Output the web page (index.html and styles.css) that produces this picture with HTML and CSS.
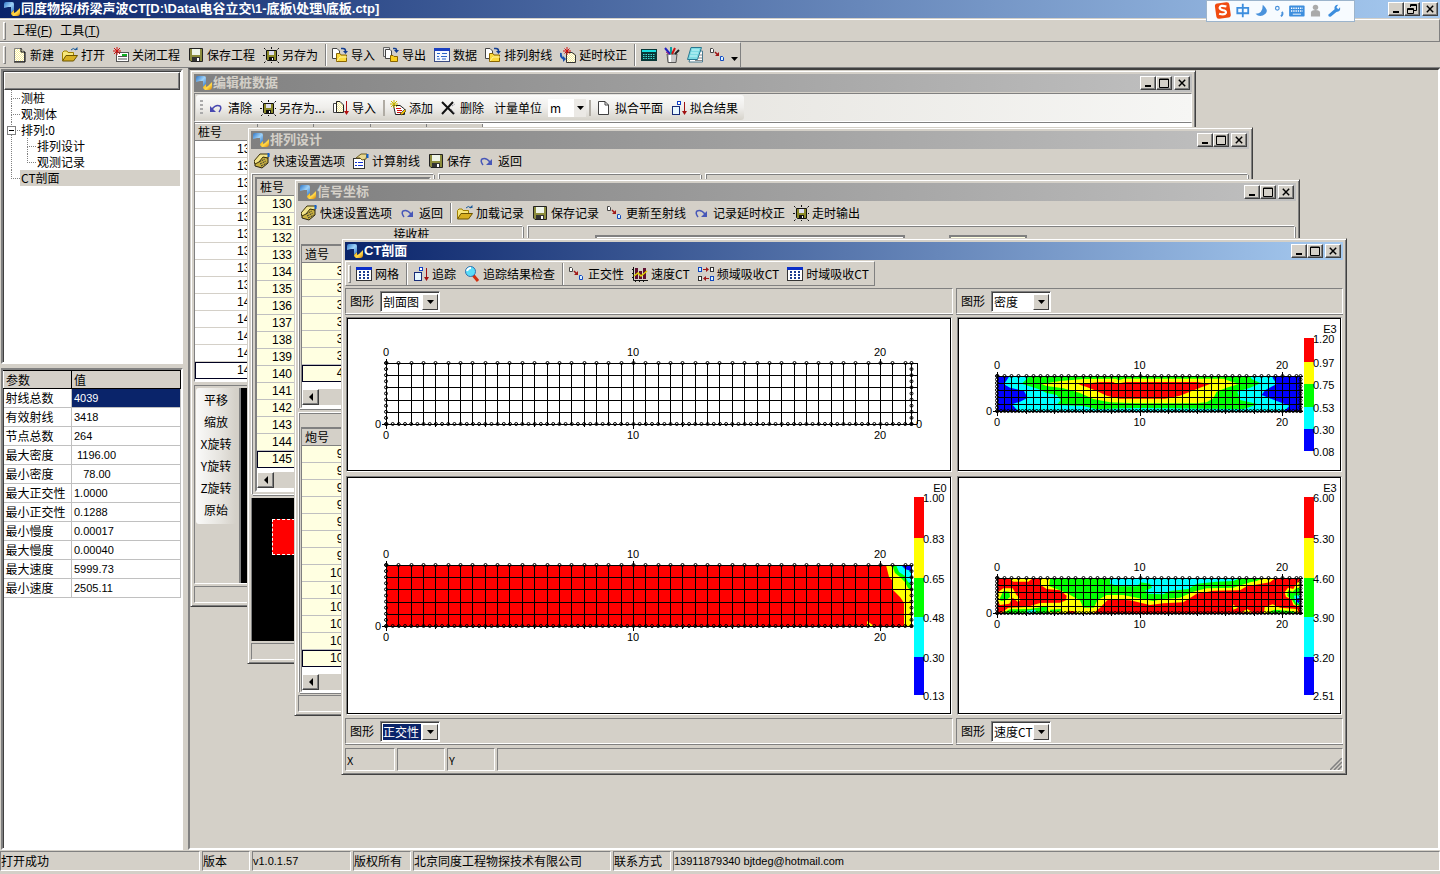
FILE: index.html
```html
<!DOCTYPE html>
<html lang="zh-CN">
<head>
<meta charset="utf-8">
<title>同度物探/桥梁声波CT</title>
<link rel="stylesheet" href="styles.css">
</head>
<body>
<svg class="sheet" aria-hidden="true">
  <defs>
    <linearGradient id="gBlue" x1="0" y1="0" x2="1" y2="1"><stop offset="0" stop-color="#2f78c8"/><stop offset=".5" stop-color="#9fd2f8"/><stop offset="1" stop-color="#2b6fc0"/></linearGradient>
    <linearGradient id="gGold" x1="0" y1="0" x2="1" y2="1"><stop offset="0" stop-color="#f4a800"/><stop offset=".6" stop-color="#ffd84a"/><stop offset="1" stop-color="#d98000"/></linearGradient>
    <pattern id="dither" width="2" height="2" patternUnits="userSpaceOnUse"><rect width="2" height="2" fill="#fff"/><rect width="1" height="1" fill="#f7ee9a"/><rect x="1" y="1" width="1" height="1" fill="#f7ee9a"/></pattern>
  </defs>
  <symbol id="i-app" viewBox="0 0 16 16"><path d="M0 3Q0 1 2 1H8Q10 1 10 3V9L7 12V6H4L0 7Z" fill="url(#gBlue)"/><path d="M7 12L10 9V12L12 11L16 7V12Q16 15 13 15H9Q7 14 7 12Z" fill="url(#gGold)"/></symbol>
  <symbol id="i-new" viewBox="0 0 16 16"><path d="M3.5 1.5H10L13.5 5V14.5H3.5Z" fill="url(#dither)" stroke="#808080"/><path d="M10 1V5H14V15H3" fill="none" stroke="#000"/></symbol>
  <symbol id="i-blank" viewBox="0 0 16 16"><path d="M2.5 1.5H9L12.500 5V14.500H2.500Z" fill="#fff" stroke="#404040"/><path d="M9 1.500V5H12.500" fill="none" stroke="#404040"/></symbol>
  <symbol id="i-open" viewBox="0 0 16 16"><path d="M.5 13.500V5.500L2 4H5L6 5.500H11.500V8" fill="#f7e77a" stroke="#a08000"/><path d="M.5 14L4 8.500H15.500L11.500 14Z" fill="#d8b020" stroke="#6b5400"/><path d="M9 3Q11 0 14 3" fill="none" stroke="#1a5a9a"/><path d="M12 3H15.500V0Z" fill="#1a5a9a"/></symbol>
  <symbol id="i-close" viewBox="0 0 16 16"><rect x="3.500" y="5.500" width="12" height="9" fill="#fff" stroke="#555"/><path d="M5 9.500H14M5 12H14" stroke="#555"/><rect x="9" y="7" width="5" height="2" fill="#10b020"/><path d="M4 0V8M0 4H8M1 1L7 7M7 1L1 7" stroke="#d01010"/></symbol>
  <symbol id="i-save" viewBox="0 0 16 16"><path d="M1.500 1.500H14.500V14.500H3L1.500 13Z" fill="#8c8c3c" stroke="#222"/><rect x="4" y="2" width="8" height="6" fill="#eef4e8"/><rect x="4" y="10" width="8" height="4" fill="#333"/><rect x="9" y="11" width="2" height="3" fill="#fff"/></symbol>
  <symbol id="i-saveas" viewBox="0 0 16 16"><path d="M3.500 3.500H13.500V13.500H4.500L3.500 12.500Z" fill="#8c8a28" stroke="#111"/><rect x="6" y="4" width="5" height="4" fill="#dde"/><rect x="6" y="10" width="5" height="3" fill="#111"/><rect x="9" y="11" width="1" height="2" fill="#fff"/><path d="M0 8.500H2M15 8.500H16M8.500 0V2M8.500 15V16M1 1L2.500 2.500M16 1L14.500 2.500M1 16L2.500 14.500M16 16L14.500 14.500" stroke="#111"/></symbol>
  <symbol id="i-import" viewBox="0 0 16 16"><path d="M.5 1.500H5L7.500 4V11.500H.5Z" fill="#fff" stroke="#444"/><path d="M4.500 14.500V6.500H8L9 8H14.500V14.500Z" fill="#fbd93c" stroke="#8a6500"/><path d="M5 14L8 10H15" fill="none" stroke="#fff4a0"/><path d="M9 1.500H11Q13.500 1.500 13.500 4" fill="none" stroke="#123c90" stroke-width="1.500"/><path d="M11 4H16L13.500 7Z" fill="#123c90"/></symbol>
  <symbol id="i-export" viewBox="0 0 16 16"><path d="M.5 .5H6.500V9.500H.5Z" fill="#e8e8e8" stroke="#666"/><path d="M2.500 2.500H7L8.500 4V11.500H2.500Z" fill="#fff" stroke="#444"/><path d="M7.500 14.500V8.500H10L11 9.500H14.500V14.500Z" fill="#fbd020" stroke="#8a6500"/><path d="M10 1.500H12Q13.500 1.500 13.500 3" fill="none" stroke="#123c90" stroke-width="1.500"/><path d="M11 3H16L13.500 6Z" fill="#123c90"/></symbol>
  <symbol id="i-data" viewBox="0 0 16 16"><rect x=".5" y="1.500" width="15" height="13" fill="#f4f8ff" stroke="#3a4a80"/><rect y="1" width="16" height="3" fill="#1a3fc0"/><path d="M3 6.500H6M8 6.500H13M3 9.500H5M7 9.500H13M3 12H6M8 12H12" stroke="#2a63c8"/></symbol>
  <symbol id="i-grid" viewBox="0 0 16 16"><rect x=".5" y="1.500" width="15" height="13" fill="#fff" stroke="#333"/><rect y="1" width="16" height="3" fill="#0a2ec8"/><path d="M3 6H13M3 9H13M3 12H13" stroke="#1c3c90" stroke-width="2" stroke-dasharray="2 2"/></symbol>
  <symbol id="i-delay" viewBox="0 0 16 16"><path d="M6.500 5.500H12L15.500 8V15.500H6.500Z" fill="url(#dither)" stroke="#333"/><path d="M7 0V8M3 4H11M4.500 1.500L9.500 6.500M9.500 1.500L4.500 6.500" stroke="#d01010"/><path d="M1 6Q0 10 4 12" fill="none" stroke="#1850b0" stroke-width="2"/><path d="M3 9L6 12L3 15Z" fill="#1850b0"/></symbol>
  <symbol id="i-calc" viewBox="0 0 16 16"><rect y="2" width="16" height="12" fill="#083838"/><rect x="1" y="3" width="14" height="2" fill="#18e0e0"/><path d="M2 7.500H14M2 9.500H14M2 11.500H14" stroke="#40d8d0" stroke-dasharray="1.500 1"/></symbol>
  <symbol id="i-pens" viewBox="0 0 16 16"><path d="M3 7H13L12 15.500H4Z" fill="#c8c8c8" stroke="#555"/><path d="M6 8V15" stroke="#fff" stroke-width="2"/><path d="M1 1L6 7" stroke="#2020c0" stroke-width="2"/><path d="M7 0V7" stroke="#10a0a0" stroke-width="2"/><path d="M11 1L8 7" stroke="#d01010" stroke-width="2"/><path d="M15 3L11 7" stroke="#222" stroke-width="2"/><path d="M2 5L5 7" stroke="#a01080"/></symbol>
  <symbol id="i-note" viewBox="0 0 16 16"><path d="M5 4H15.500V15H2Z" fill="#fff" stroke="#4a7a90"/><path d="M4 .5H14.500L10.500 12.500H.5Z" fill="#7edce4" stroke="#287890"/><path d="M5 3H12M4 6H11M3 9H10" stroke="#c8f8fa"/><path d="M12 8H15M11 11H15M8 13.500H15" stroke="#888"/></symbol>
  <symbol id="i-link" viewBox="0 0 16 16"><path d="M.5 1.500H2.500L3.500 2.500V5.500H.5Z" fill="#fff" stroke="#444"/><path d="M10.500 9.500H12.500L13.500 10.500V13.500H10.500Z" fill="#d8f0ff" stroke="#1048c0"/><path d="M5 5L8 8" stroke="#a01818" stroke-width="1.500"/><path d="M9 5V9H5Z" fill="#a01818"/></symbol>
  <symbol id="i-undo" viewBox="0 0 16 16"><path d="M3 9Q7 4 11 6Q13 8 10 12" fill="none" stroke="#4848b0" stroke-width="1.500"/><path d="M1 6V12H7Z" fill="#4848b0"/></symbol>
  <symbol id="i-redo" viewBox="0 0 16 16"><path d="M11 9Q7 4 3 6Q1 8 4 12" fill="none" stroke="#4858b8" stroke-width="1.500"/><path d="M13 6V12H7Z" fill="#4858b8"/></symbol>
  <symbol id="i-getin" viewBox="0 0 16 16"><path d="M.5 3.500H6V12.500H.5Z" fill="#fff" stroke="#444"/><path d="M3.500 1.500H7L10.500 5V12.500H3.500Z" fill="url(#dither)" stroke="#222"/><path d="M13.500 1V13" stroke="#b01010"/><path d="M11 11H16L13.500 15Z" fill="#b01010"/></symbol>
  <symbol id="i-add" viewBox="0 0 16 16"><path d="M3.500 5.500H10L14.500 9V14.500H5.500Z" fill="#fff" stroke="#222"/><path d="M6 8.500H11M7 10.500H12M7 12.500H11" stroke="#d01010"/><path d="M4 0V8M0 4H8M1 1L7 7M7 1L1 7" stroke="#c8b800"/><path d="M10 14L15 9L16 11L12 15Z" fill="#f0c000" stroke="#222" stroke-width=".6"/></symbol>
  <symbol id="i-del" viewBox="0 0 16 16"><path d="M1 2L13 14M12 2L1 14" stroke="#111" stroke-width="2"/><path d="M10 9L14 14M11 6L14 4" stroke="#778" stroke-dasharray="1 1"/></symbol>
  <symbol id="i-fit" viewBox="0 0 16 16"><rect x="6.500" y="1.500" width="3" height="3" fill="#fff" stroke="#1040c8"/><rect x="1.500" y="6.500" width="7" height="8" fill="#e8f8ff" stroke="#182c78"/><path d="M13.500 2V12" stroke="#a01010"/><path d="M11 11H16L13.500 15Z" fill="#a01010"/></symbol>
  <symbol id="i-phone" viewBox="0 0 16 16"><path d="M1 9L7 3L14 5V10L8 15L1 13Z" fill="#c8b040" stroke="#2a2410"/><path d="M0 8L6 1H15L14 5L9 4L5 9L1 11Z" fill="#f2e48c" stroke="#3a3008"/><path d="M5 9L11 6M6 11L12 8M7 13L13 10" stroke="#333" stroke-dasharray="2 1"/><path d="M14.500 0V4" stroke="#1060d0" stroke-width="2"/></symbol>
  <symbol id="i-prop" viewBox="0 0 16 16"><rect x=".5" y="5.500" width="11" height="10" fill="#fff" stroke="#333"/><path d="M2 9.500H4M5 9.500H10M2 12.500H4M5 12.500H10" stroke="#1030d0"/><path d="M3 5L8 1H14L13 6L9 7L7 5Z" fill="#e8d890" stroke="#6a5a20"/><path d="M14.500 1V5" stroke="#1060d0" stroke-width="2"/></symbol>
  <symbol id="i-find" viewBox="0 0 16 16"><path d="M9 9L14 15" stroke="#d03010" stroke-width="3"/><circle cx="6.500" cy="5.500" r="5" fill="#58dcf8" stroke="#3070b0"/><path d="M3 5Q4 2 7 2" fill="none" stroke="#fff" stroke-width="2"/></symbol>
  <symbol id="i-bars" viewBox="0 0 16 16"><path d="M1.500 1V14.500H16M0 3.500H2M0 7.500H2M0 11.500H2" stroke="#111" fill="none"/><path d="M4.500 2V13M8.500 5V13M12.500 2V13" stroke="#601030" stroke-width="3"/><path d="M2 10L6 7L9 10L15 5" fill="none" stroke="#e0d000" stroke-width="1.500"/><path d="M3.500 15V16M7.500 15V16M11.500 15V16" stroke="#111"/></symbol>
  <symbol id="i-net" viewBox="0 0 16 16"><g fill="#d8f0ff" stroke="#1048c0"><rect x=".5" y="1.500" width="3" height="4"/><rect x="12.500" y="10.500" width="3" height="4"/></g><g fill="#fff" stroke="#333"><rect x="12.500" y="1.500" width="3" height="4"/><rect x=".5" y="10.500" width="3" height="4"/></g><path d="M5 3.500H9M7 12.500H11" stroke="#a01818"/><path d="M8 1L11 3.500L8 6ZM8 10L5 12.500L8 15Z" fill="#a01818"/></symbol>
  <symbol id="i-min" viewBox="0 0 10 10"><path d="M2 8H8" stroke="#000" stroke-width="2"/></symbol>
  <symbol id="i-max" viewBox="0 0 10 10"><path d="M.5 1H9.500V9.500H.5V1M0 1.500H10" fill="none" stroke="#000"/></symbol>
  <symbol id="i-res" viewBox="0 0 10 10"><path d="M3.500 3V.5H9.500V6.500H7M3 1.500H10M.5 4.500H6.500V9.500H.5ZM0 5.500H7" fill="none" stroke="#000"/></symbol>
  <symbol id="i-x" viewBox="0 0 10 10"><path d="M1 1L9 9M9 1L1 9" stroke="#000" stroke-width="1.800"/></symbol>
  <symbol id="i-down" viewBox="0 0 8 8"><path d="M1 2H8L4.500 6Z"/></symbol>
  <symbol id="i-left" viewBox="0 0 8 8"><path d="M6 0V8L2 4Z"/></symbol>
</svg>

<div class="app">
  <header class="titlebar active main-title">
    <svg class="ic"><use href="#i-app"/></svg><h1>同度物探/桥梁声波CT[D:\Data\电谷立交\1-底板\处理\底板.ctp]</h1>
    <span class="caps"><button aria-label="最小化"><svg><use href="#i-min"/></svg></button><button aria-label="还原"><svg><use href="#i-res"/></svg></button><button class="x" aria-label="关闭"><svg><use href="#i-x"/></svg></button></span>
  </header>

  <nav class="menubar"><i class="grip"></i><button>工程(<u>F</u>)</button><button>工具(<u>T</u>)</button></nav>

  <div class="toolrow">
    <div class="toolbar main-tools">
      <i class="grip"></i>
      <button><svg class="ic"><use href="#i-new"/></svg>新建</button>
      <button><svg class="ic"><use href="#i-open"/></svg>打开</button>
      <button><svg class="ic"><use href="#i-close"/></svg>关闭工程</button>
      <button><svg class="ic"><use href="#i-save"/></svg>保存工程</button>
      <button><svg class="ic"><use href="#i-saveas"/></svg>另存为</button>
      <i class="sep"></i>
      <button><svg class="ic"><use href="#i-import"/></svg>导入</button>
      <button><svg class="ic"><use href="#i-export"/></svg>导出</button>
      <button><svg class="ic"><use href="#i-data"/></svg>数据</button>
      <button><svg class="ic"><use href="#i-import"/></svg>排列射线</button>
      <button><svg class="ic"><use href="#i-delay"/></svg>延时校正</button>
      <i class="sep"></i>
      <button class="only" aria-label="计算器"><svg class="ic"><use href="#i-calc"/></svg></button>
      <button class="only" aria-label="画笔"><svg class="ic"><use href="#i-pens"/></svg></button>
      <button class="only" aria-label="记事本"><svg class="ic"><use href="#i-note"/></svg></button>
      <button class="only" aria-label="连接"><svg class="ic"><use href="#i-link"/></svg></button>
      <button class="more" aria-label="更多"><svg><use href="#i-down"/></svg></button>
    </div>
  </div>

  <main class="work">
    <aside class="side">
      <section class="tree-box">
        <div class="tree-head"></div>
        <ul class="tree">
          <li>测桩</li>
          <li>观测体</li>
          <li class="open"><button class="twist" aria-label="折叠"></button>排列:0
            <ul><li>排列设计</li><li>观测记录</li></ul>
          </li>
          <li class="last"><span class="sel">CT剖面</span></li>
        </ul>
      </section>
      <section class="param-box">
        <table class="params">
          <thead><tr><th>参数</th><th>值</th></tr></thead>
          <tbody>
            <tr><td>射线总数</td><td class="cur">4039</td></tr>
            <tr><td>有效射线</td><td>3418</td></tr>
            <tr><td>节点总数</td><td>264</td></tr>
            <tr><td>最大密度</td><td>&nbsp;1196.00</td></tr>
            <tr><td>最小密度</td><td>&nbsp;&nbsp;&nbsp;78.00</td></tr>
            <tr><td>最大正交性</td><td>1.0000</td></tr>
            <tr><td>最小正交性</td><td>0.1288</td></tr>
            <tr><td>最小慢度</td><td>0.00017</td></tr>
            <tr><td>最大慢度</td><td>0.00040</td></tr>
            <tr><td>最大速度</td><td>5999.73</td></tr>
            <tr><td>最小速度</td><td>2505.11</td></tr>
          </tbody>
        </table>
      </section>
    </aside>

    <div class="mdi">
      <section class="win w1">
        <header class="titlebar"><svg class="ic"><use href="#i-app"/></svg><h2>编辑桩数据</h2><span class="caps"><button aria-label="最小化"><svg><use href="#i-min"/></svg></button><button aria-label="最大化"><svg><use href="#i-max"/></svg></button><button class="x" aria-label="关闭"><svg><use href="#i-x"/></svg></button></span></header>
        <div class="soft-row">
          <div class="toolbar soft">
            <i class="dots"></i>
            <button><svg class="ic"><use href="#i-undo"/></svg>清除</button>
            <button><svg class="ic"><use href="#i-saveas"/></svg>另存为...</button>
            <button><svg class="ic"><use href="#i-getin"/></svg>导入</button>
            <i class="sep"></i>
            <button><svg class="ic"><use href="#i-add"/></svg>添加</button>
            <button><svg class="ic"><use href="#i-del"/></svg>删除</button>
            <label for="unit">计量单位</label>
            <span class="combo flat"><select id="unit"><option>m</option></select><svg class="arrow"><use href="#i-down"/></svg></span>
            <i class="sep"></i>
            <button><svg class="ic"><use href="#i-blank"/></svg>拟合平面</button>
            <button><svg class="ic"><use href="#i-fit"/></svg>拟合结果</button>
          </div>
        </div>
        <div class="sheet-box">
          <table class="rows plain" data-from="131" data-to="144"><thead><tr><th>桩号</th><th></th><th></th><th></th><th></th></tr></thead><tbody></tbody></table>
        </div>
        <div class="view3d">
          <div class="stack"><button>平移</button><button>缩放</button><button>X旋转</button><button>Y旋转</button><button>Z旋转</button><button>原始</button></div>
          <div class="black"></div>
        </div>
        <footer class="status"><span class="wide"></span></footer>
      </section>

      <section class="win w2">
        <header class="titlebar"><svg class="ic"><use href="#i-app"/></svg><h2>排列设计</h2><span class="caps"><button aria-label="最小化"><svg><use href="#i-min"/></svg></button><button aria-label="最大化"><svg><use href="#i-max"/></svg></button><button class="x" aria-label="关闭"><svg><use href="#i-x"/></svg></button></span></header>
        <div class="toolbar bare">
          <button><svg class="ic"><use href="#i-phone"/></svg>快速设置选项</button>
          <button><svg class="ic"><use href="#i-prop"/></svg>计算射线</button>
          <button><svg class="ic"><use href="#i-save"/></svg>保存</button>
          <button><svg class="ic"><use href="#i-redo"/></svg>返回</button>
        </div>
        <div class="panels design">
          <div class="etched tablebox">
            <div class="sunk">
              <table class="rows cream" data-from="130" data-to="145"><thead><tr><th>桩号</th></tr></thead><tbody></tbody></table>
              <div class="hscroll"><button aria-label="向左"><svg><use href="#i-left"/></svg></button></div>
            </div>
          </div>
          <div class="etched opts"><i class="box"></i><i class="box grey"></i></div>
          <div class="etched opts more-opts"><i class="box"></i><i class="box dark"></i><i class="box grey"></i></div>
        </div>
        <div class="black scene"><div class="slab"></div></div>
        <footer class="status"><span class="wide"></span></footer>
      </section>

      <section class="win w3">
        <header class="titlebar"><svg class="ic"><use href="#i-app"/></svg><h2>信号坐标</h2><span class="caps"><button aria-label="最小化"><svg><use href="#i-min"/></svg></button><button aria-label="最大化"><svg><use href="#i-max"/></svg></button><button class="x" aria-label="关闭"><svg><use href="#i-x"/></svg></button></span></header>
        <div class="toolbar bare">
          <button><svg class="ic"><use href="#i-phone"/></svg>快速设置选项</button>
          <button><svg class="ic"><use href="#i-redo"/></svg>返回</button>
          <i class="sep"></i>
          <button><svg class="ic"><use href="#i-open"/></svg>加载记录</button>
          <button><svg class="ic"><use href="#i-save"/></svg>保存记录</button>
          <button><svg class="ic"><use href="#i-link"/></svg>更新至射线</button>
          <button><svg class="ic"><use href="#i-redo"/></svg>记录延时校正</button>
          <button><svg class="ic"><use href="#i-saveas"/></svg>走时输出</button>
        </div>
        <div class="panels signal">
          <div class="signal-col">
            <div class="etched recv"><div class="cap">接收桩</div>
              <div class="sunk"><table class="rows cream" data-from="34" data-to="40"><thead><tr><th>道号</th></tr></thead><tbody></tbody></table>
              <div class="hscroll"><button aria-label="向左"><svg><use href="#i-left"/></svg></button></div></div>
            </div>
            <div class="etched shot"><div class="cap"></div>
              <div class="sunk"><table class="rows cream" data-from="93" data-to="105"><thead><tr><th>炮号</th></tr></thead><tbody></tbody></table>
              <div class="hscroll"><button aria-label="向左"><svg><use href="#i-left"/></svg></button></div></div>
            </div>
          </div>
          <div class="etched fields"><i class="field"></i><i class="field pale"></i></div>
        </div>
        <footer class="status"><span class="wide"></span></footer>
      </section>

      <section class="win w4">
        <header class="titlebar active"><svg class="ic"><use href="#i-app"/></svg><h2>CT剖面</h2><span class="caps"><button aria-label="最小化"><svg><use href="#i-min"/></svg></button><button aria-label="最大化"><svg><use href="#i-max"/></svg></button><button class="x" aria-label="关闭"><svg><use href="#i-x"/></svg></button></span></header>
        <div class="ctrow">
          <div class="toolbar ct">
            <i class="grip"></i>
            <button><svg class="ic"><use href="#i-grid"/></svg>网格</button>
            <i class="sep"></i>
            <button><svg class="ic"><use href="#i-fit"/></svg>追踪</button>
            <button><svg class="ic"><use href="#i-find"/></svg>追踪结果检查</button>
            <i class="sep"></i>
            <button><svg class="ic"><use href="#i-link"/></svg>正交性</button>
            <button><svg class="ic"><use href="#i-bars"/></svg>速度CT</button>
            <button><svg class="ic"><use href="#i-net"/></svg>频域吸收CT</button>
            <button><svg class="ic"><use href="#i-grid"/></svg>时域吸收CT</button>
          </div>
        </div>
        <div class="quad">
          <div class="pick"><label for="g1">图形</label><span class="combo"><select id="g1"><option>剖面图</option></select><svg class="arrow"><use href="#i-down"/></svg></span></div>
          <div class="pick"><label for="g2">图形</label><span class="combo"><select id="g2"><option>密度</option></select><svg class="arrow"><use href="#i-down"/></svg></span></div>
          <div class="plot"><svg id="c1" role="img" aria-label="剖面图"></svg></div>
          <div class="plot"><svg id="c2" role="img" aria-label="密度"></svg></div>
          <div class="plot"><svg id="c3" role="img" aria-label="正交性"></svg></div>
          <div class="plot"><svg id="c4" role="img" aria-label="速度CT"></svg></div>
          <div class="pick"><label for="g3">图形</label><span class="combo hot"><select id="g3"><option>正交性</option></select><svg class="arrow"><use href="#i-down"/></svg></span></div>
          <div class="pick"><label for="g4">图形</label><span class="combo"><select id="g4"><option>速度CT</option></select><svg class="arrow"><use href="#i-down"/></svg></span></div>
        </div>
        <footer class="status coords"><span>X</span><span></span><span>Y</span><span class="wide"></span>
          <svg class="size" viewBox="0 0 12 12"><path d="M0 12L12 0M4 12L12 4M8 12L12 8" stroke="#808080" stroke-width="1.500"/></svg></footer>
      </section>
    </div>
  </main>

  <footer class="appstatus">
    <span class="s1">打开成功</span><span class="s2">版本</span><span class="s3 num">v1.0.1.57</span><span class="s4">版权所有</span><span class="s5">北京同度工程物探技术有限公司</span><span class="s6">联系方式</span><span class="s7 num">13911879340 bjtdeg@hotmail.com</span>
  </footer>

  <div class="ime">
    <svg viewBox="0 0 149 22">
      <rect x="3" y="2" width="16" height="17" rx="3" fill="#f04a10" transform="rotate(-8 11 10)"/>
      <path d="M15 6Q8 4 7.500 7.500Q8 9.500 11 10Q15 10.500 14.500 13Q13 16 7 14" fill="none" stroke="#fff" stroke-width="2.400"/>
      <path d="M27 7.500H39V13.500H27ZM33 3V18" fill="none" stroke="#3d8ede" stroke-width="2"/>
      <path d="M55 4Q62 10 58 14Q52 19 47 14Q55 14 55 4Z" fill="#4a92dc"/>
      <circle cx="71" cy="8" r="2" fill="none" stroke="#4a92dc" stroke-width="1.300"/><path d="M76 12Q78 14 75 17" fill="none" stroke="#4a92dc" stroke-width="2"/>
      <rect x="84" y="5" width="17" height="12" rx="1" fill="#3d8ede"/><path d="M86 8H99M86 11H99" stroke="#fff" stroke-width="1.500" stroke-dasharray="1.500 1"/><path d="M88 14.500H97" stroke="#fff"/>
      <circle cx="113" cy="7" r="3" fill="#aaa"/><path d="M108 17V13Q108 10 113 10Q118 10 118 13V17Z" fill="#aaa"/>
      <path d="M127 15L134 9Q133 4 138 4L136 7L138 9L140 7Q141 12 136 12L130 17Q127 18 127 15Z" fill="#3d8ede"/>
    </svg>
  </div>
</div>
<script src="app.js"></script>
</body>
</html>
```
FILE: styles.css
```css
* { box-sizing: border-box; }
:root { --face: #d4d0c8; --dark: #808080; --ink: #404040; --cream: #ffffe1; }
body { margin: 0; background: var(--face); color: #000; font: 12px/16px "Noto Sans CJK SC", "Liberation Sans", sans-serif; }
button, select { font: inherit; color: inherit; margin: 0; padding: 0; border: 0; background: none; border-radius: 0; }
h1, h2, ul { margin: 0; padding: 0; }
i { display: block; }
.sheet { position: absolute; width: 0; height: 0; }
.num { font-family: "Liberation Sans", sans-serif; font-size: 11px; }

.app { position: relative; display: flex; flex-direction: column; min-height: 100vh; overflow: hidden; }
.ic { width: 16px; height: 16px; flex: none; }

/* title bars */
.titlebar { display: flex; align-items: center; height: 18px; flex: none; padding: 0 2px; gap: 1px; background: linear-gradient(90deg, #808080, #c0c0c0); color: var(--face); }
.titlebar.active { background: linear-gradient(90deg, #0a246a, #a6caf0); color: #fff; }
.titlebar h1, .titlebar h2 { font: 700 13px/18px "Liberation Sans", "Noto Sans CJK SC", sans-serif; white-space: nowrap; }
.caps { display: flex; margin-left: auto; }
.caps button { width: 16px; height: 14px; display: grid; place-items: center; background: var(--face); border: 1px solid; border-color: #fff var(--ink) var(--ink) #fff; box-shadow: inset -1px -1px var(--dark); }
.caps svg { width: 10px; height: 10px; }
.caps .x { margin-left: 2px; }
.caps .x svg { width: 8px; height: 8px; }
.main-title { padding-left: 4px; }

/* menu and toolbars */
.grip { width: 3px; height: 18px; border: 1px solid; border-color: #fff var(--dark) var(--dark) #fff; margin: 0 4px 0 3px; flex: none; }
.menubar { display: flex; align-items: center; height: 23px; border-top: 1px solid #fff; border-bottom: 1px solid var(--dark); margin-top: 1px; border-right: 1px solid var(--dark); }
.menubar button { margin: 0 5px 0 3px; font-family: "Liberation Sans", "Noto Sans CJK SC", sans-serif; }
.toolrow { border-bottom: 1px solid var(--dark); }
.toolbar { display: flex; align-items: center; white-space: nowrap; }
.toolbar button { display: flex; align-items: center; gap: 3px; padding: 0 4px; height: 22px; }
.main-tools { width: max-content; height: 25px; border-top: 1px solid #fff; border-right: 1px solid var(--dark); }
.main-tools .grip, .ct .grip { margin-right: 1px; }
.sep { width: 2px; height: 22px; border-left: 1px solid var(--dark); border-right: 1px solid #fff; margin: 0 1px 0 3px; flex: none; }
.toolbar .only { padding-right: 3px; }
.toolbar .more { padding: 8px 2px 0 1px; }
.more svg { width: 8px; height: 8px; }

/* work area */
.work { flex: 1; display: flex; min-height: 0; }
.side { width: 184px; flex: none; display: flex; flex-direction: column; gap: 4px; padding: 1px 1px 0 1px; }
.tree-box, .param-box { background: #fff; border: 2px solid; border-color: var(--dark) #fff #fff var(--dark); }
.tree-box { height: 295px; box-shadow: inset 1px 1px var(--ink); padding: 1px; }
.param-box { flex: 1; padding: 0; box-shadow: inset 1px 0 var(--ink); }
.tree-head { height: 18px; background: var(--face); border: 1px solid; border-color: #fff var(--ink) var(--ink) #fff; box-shadow: inset -1px -1px var(--dark); }
.tree, .tree ul { list-style: none; }
.tree { padding: 0 0 0 7px; }
.tree li { position: relative; padding-left: 10px; line-height: 16px; }
.tree li::before { content: ""; position: absolute; left: 0; top: 0; width: 8px; height: 8px; border-left: 1px dotted var(--dark); border-bottom: 1px dotted var(--dark); }
.tree li:not(:last-child)::after { content: ""; position: absolute; left: 0; top: 8px; bottom: 0; border-left: 1px dotted var(--dark); }
.tree ul { padding-left: 6px; }
.twist { position: absolute; left: -4px; top: 4px; z-index: 1; width: 9px; height: 9px; border: 1px solid var(--dark); background: linear-gradient(#000, #000) center / 5px 1px no-repeat #fff; }
.tree .sel { display: block; background: var(--face); margin-left: -1px; padding-left: 1px; }
.params { width: 178px; border-collapse: collapse; table-layout: fixed; }
.params th { height: 18px; background: var(--face); font-weight: 400; text-align: left; padding: 0 2px; border: 1px solid #000; border-left-color: #fff; line-height: 16px; }
.params th:first-child { width: 68px; }
.params td { height: 19px; padding: 0 2px; line-height: 16px; border: 1px solid #c0c0c0; border-left: 0; white-space: nowrap; }
.params td + td { font: 11px/16px "Liberation Sans", sans-serif; }
.params .cur { background: #0a246a; color: #fff; }

.mdi { flex: 1; position: relative; margin-left: 4px; border: 2px solid; border-color: var(--ink) #fff #fff var(--dark); overflow: hidden; }

/* child windows, free-floating on the desktop */
.win { position: absolute; width: 1006px; height: 537px; display: flex; flex-direction: column; background: var(--face); border: 1px solid; border-color: var(--face) var(--ink) var(--ink) var(--face); box-shadow: inset 1px 1px #fff, inset -1px -1px var(--dark); padding: 3px; }
.w1 { left: 0; top: 0; }
.w2 { left: 57px; top: 57px; }
.w3 { left: 104px; top: 109px; }
.w4 { left: 151px; top: 168px; }

.etched { border: 1px solid; border-color: var(--dark) #fff #fff var(--dark); box-shadow: 1px 1px var(--dark), -1px -1px #fff; min-width: 0; }
.status { display: flex; gap: 2px; height: 17px; flex: none; margin-top: 2px; }
.status span { border: 1px solid; border-color: var(--dark) #fff #fff var(--dark); }
.status .wide { flex: 1; }
.black { background: #000; }
.bare { height: 24px; flex: none; }
.bare button:first-child { padding-left: 3px; }
.bare .sep { height: 20px; }

.rows { border-collapse: separate; border-spacing: 0; table-layout: fixed; }
.rows th { height: 17px; padding: 0 0 0 3px; background: var(--face); border-bottom: 1px solid var(--dark); border-right: 1px solid var(--dark); font-weight: 400; text-align: left; line-height: 16px; }
.rows td { height: 17px; padding: 0 2px 0 0; text-align: right; font: 12px/15px "Liberation Sans", sans-serif; border-bottom: 1px solid #c0c0c0; border-right: 1px solid #c0c0c0; }
.cream td { background: var(--cream); }
.rows tr:last-child td:first-child { border: 1px solid #000020; }
.hscroll { display: flex; height: 16px; margin-top: 4px; background: var(--face); }
.hscroll button { width: 17px; display: grid; place-items: center; border: 1px solid; border-color: #fff var(--ink) var(--ink) #fff; box-shadow: inset -1px -1px var(--dark); }
.hscroll svg { width: 8px; height: 8px; }

/* pile data window */
.soft-row { height: 29px; flex: none; margin-top: 1px; padding: 1px; border: 1px solid; border-color: var(--dark) #fff #fff var(--dark); background: linear-gradient(90deg, #d9d6cf, #f6f6f4); }
.soft { width: max-content; height: 25px; padding-right: 2px; border-radius: 3px; background: linear-gradient(#fbfbfa, #efeeeb 50%, #d6d3cb); }
.soft .dots { width: 3px; height: 16px; margin: 0 2px 0 4px; background: repeating-linear-gradient(#aaa 0 2px, transparent 2px 4px); }
.soft label { margin: 0 6px; }
.soft .sep { height: 16px; border-color: #b0aca4; }
.sheet-box { height: 260px; flex: none; background: #fff; border: 1px solid; border-color: var(--dark) #fff #fff var(--dark); padding: 1px 0 0; }
.plain { width: 288px; }
.plain th:first-child { width: 63px; }
.plain td:first-child { padding-right: 0; }
.plain tbody td { border-color: var(--face); }
.view3d { flex: 1; display: flex; margin-top: 3px; padding: 2px 1px 0; border: 1px solid; border-color: var(--dark) #fff #fff var(--dark); }
.stack { width: 40px; height: 136px; display: flex; flex-direction: column; border-radius: 3px; background: linear-gradient(90deg, #fafaf9, #e6e4df 60%, #d4d0c8); }
.stack button { height: 22px; }
.stack button:first-child { margin-top: 1px; }
.view3d .black { flex: 1; margin-left: 3px; border-left: 2px solid var(--dark); }

/* layout design window */
.panels { display: flex; gap: 5px; flex: none; padding: 1px 1px 0; }
.design { height: 322px; }
.tablebox { width: 182px; padding: 2px; }
.sunk { border: 2px solid; border-color: var(--dark) #fff #fff var(--dark); background: #fff; height: 100%; overflow: hidden; }
.w2 .rows { width: 38px; }
.opts { display: flex; gap: 20px; padding: 4px 16px; width: 262px; }
.more-opts { flex: 1; width: auto; }
.box { width: 58px; height: 20px; border: 1px solid; border-color: #fff var(--dark) var(--dark) #fff; }
.box.grey { border-color: var(--dark); width: 38px; }
.box.dark { border-color: var(--ink); width: 36px; }
.more-opts .grey { margin-left: 38px; }
.scene { flex: 1; margin-top: 3px; padding: 21px 20px; border-left: 1px solid var(--dark); }
.slab { width: 300px; height: 36px; background: #f00; border: 1px dashed #fff; }

/* signal coordinate window */
.signal { flex: 1; min-height: 0; }
.signal-col { width: 224px; display: flex; flex-direction: column; gap: 4px; }
.recv { height: 183px; }
.shot { flex: 1; }
.recv, .shot { display: flex; flex-direction: column; padding: 0 0 0 1px; }
.cap { height: 17px; line-height: 13px; text-align: center; flex: none; }
.shot .cap { height: 13px; }
.signal .sunk { flex: 1; border-width: 2px 1px 1px; height: auto; }
.signal .rows { width: 210px; }
.signal .rows td { padding-right: 161px; }
.signal .hscroll { margin-top: 7px; }
.fields { flex: 1; display: flex; gap: 44px; padding: 8px 66px; }
.field { width: 310px; height: 20px; background: #fff; border: 2px solid var(--dark); }
.field.pale { width: 78px; background: var(--cream); }

/* section plots window */
.ctrow { height: 27px; flex: none; display: flex; padding: 1px 0; }
.ct { border: 1px solid; border-color: #fff var(--dark) var(--dark) #fff; padding-right: 1px; }
.ct .grip { margin-left: 2px; }
.quad { flex: 1; min-height: 0; display: grid; grid-template-columns: 608fr 387fr; grid-template-rows: 28px 159fr 243fr 28px; column-gap: 3px; }
.pick { display: flex; align-items: center; gap: 6px; padding: 0 4px; margin: 1px 0; border: 1px solid; border-color: var(--dark) #fff #fff var(--dark); box-shadow: 0 1px var(--dark); }
.combo { display: flex; height: 21px; width: 60px; background: #fff; border: 1px solid; border-color: var(--dark) #fff #fff var(--dark); box-shadow: inset 1px 1px var(--ink); padding: 2px 1px 1px 2px; }
.combo select { flex: 1; min-width: 0; appearance: none; line-height: 16px; outline: 0; }
.combo .arrow { width: 16px; padding: 3px; background: var(--face); border: 1px solid; border-color: #fff var(--ink) var(--ink) #fff; flex: none; }
.combo.hot select { background: #0a246a; color: #fff; margin-right: 1px; }
.combo.flat { width: 38px; height: 18px; border: 0; box-shadow: none; padding: 0 0 0 2px; }
.combo.flat .arrow { width: 12px; height: 18px; border: 0; padding: 5px 2px; background: #ebe9e5; }
.plot { margin: 2px 1px; border: 1px solid; border-color: var(--dark) #fff #fff var(--dark); min-height: 0; }
.plot svg { display: block; width: 100%; height: 100%; background: #fff; border: 1px solid #000; }
.plot text { font: 11px "Liberation Sans", sans-serif; }
.coords { position: relative; height: 23px; margin-top: 3px; }
.coords span { width: 50px; line-height: 22px; padding-left: 1px; font-size: 11px; }
.coords span:nth-child(2), .coords span:nth-child(3) { width: 48px; }
.size { position: absolute; right: 1px; bottom: 1px; width: 12px; height: 12px; }

/* bottom status bar */
.appstatus { display: flex; gap: 2px; height: 20px; margin: 1px 0 3px; flex: none; }
.appstatus span { border: 1px solid; border-color: var(--dark) #fff #fff var(--dark); line-height: 18px; white-space: nowrap; }
.s1 { width: 200px; } .s2 { width: 48px; } .s3 { width: 99px; } .s4 { width: 58px; } .s5 { width: 198px; } .s6 { width: 58px; } .s7 { flex: 1; }

.ime { position: absolute; right: 85px; top: 0; width: 149px; height: 22px; background: #f7fbff; border: 1px solid #9cb4cc; }
.ime svg { display: block; width: 147px; height: 20px; }
```
FILE: app.js
```js
/* fill numbered grids */
document.querySelectorAll('.rows').forEach(function (t) {
  var cols = t.querySelectorAll('th').length, html = '';
  for (var n = +t.dataset.from; n <= +t.dataset.to; n++) {
    html += '<tr><td>' + n + '</td>' + '<td></td>'.repeat(cols - 1) + '</tr>';
  }
  t.tBodies[0].innerHTML = html;
});

var COLORS = ['#f00', '#ff0', '#0f0', '#0ff', '#00f'];

function line(x1, y1, x2, y2) { return '<path d="M' + x1 + ' ' + y1 + 'L' + x2 + ' ' + y2 + '"/>'; }
function label(x, y, s, anchor) { return '<text x="' + x + '" y="' + (y + 4) + '" text-anchor="' + (anchor || 'middle') + '">' + s + '</text>'; }

function draw(id, o) {
  var s = '', lines = '', dots = '', i, x, y;
  var right = o.x + o.w, bottom = o.y + o.h, half = o.unit / 2;
  s += o.fill || '';
  for (x = o.x; x < right; x += half) {
    lines += line(Math.round(x) + .5, o.y, Math.round(x) + .5, bottom);
    dots += '<circle cx="' + (Math.round(x) + .5) + '" cy="' + o.y + '" r="1.500"/>';
  }
  for (i = 0; i <= 5; i++) {
    y = Math.round(o.y + o.h * i / 5) + .5;
    lines += line(o.x, y, right + o.over, y);
  }
  lines += line(right + .5, o.y, right + .5, bottom);
  if (o.over > 4) lines += line(right + o.over, o.y, right + o.over, bottom);
  for (x = o.x; x <= right; x += half / 2) dots += '<circle cx="' + (x + .5) + '" cy="' + bottom + '" r="1.500"/>';
  for (i = 0; i <= 10; i++) {
    y = o.y + o.h * i / 10;
    dots += '<circle cx="' + o.x + '" cy="' + y + '" r="1.500"/><circle cx="' + (right + .5) + '" cy="' + y + '" r="1.500"/>';
  }
  for (i = 0; i <= 2; i++) {
    x = Math.round(o.x + i * 10 * o.unit) + .5;
    lines += line(x, o.y - 4, x, o.y) + line(x, bottom, x, bottom + 5);
  }
  for (i = 2; i <= 20; i += 2) {
    x = Math.round(o.x + i * o.unit) + .5;
    lines += line(x, bottom, x, bottom + 3);
  }
  lines += line(o.x - 4, bottom + .5, o.x, bottom + .5);
  s += '<g stroke="#000" fill="none" shape-rendering="crispEdges">' + lines + '</g><g stroke="#000" fill="none">' + dots + '</g>';
  for (i = 0; i <= 2; i++) {
    x = o.x + i * 10 * o.unit;
    s += label(x, o.y - 11, i * 10) + label(x, bottom + 11, i * 10);
  }
  s += label(o.x - 8, bottom, 0);
  if (o.over > 4) s += label(right + 8, bottom, 0);
  if (o.bar) {
    o.bar.stops.forEach(function (v, k) {
      if (k < 5) s += '<rect x="' + o.bar.x + '" y="' + v + '" width="10" height="' + (o.bar.stops[k + 1] - v) + '" fill="' + COLORS[k] + '"/>';
      s += label(o.bar.x + 9, v + 1, o.bar.text[k], 'start');
    });
    s += label(o.bar.x + 26, o.bar.stops[0] - 9, o.bar.head);
  }
  document.getElementById(id).innerHTML = s;
}

function poly(color, pts) { return '<polygon fill="' + color + '" points="' + pts + '"/>'; }

draw('c1', { x: 38, y: 44, w: 525, h: 61, unit: 24.7, over: 6 });

draw('c3', {
  x: 38, y: 87, w: 525, h: 61, unit: 24.7, over: 2,
  fill: '<rect x="38" y="87" width="525" height="61" fill="#f00"/>' +
    poly('#ff0', '538,87 541,99 545,103 545,112 552,119 556,125 556,148 563,148 563,87') +
    poly('#0f0', '544,87 547,95 552,99 557,104 560,110 563,112 563,87') +
    poly('#0ff', '548,87 551,94 557,98 560,104 563,106 563,87') +
    poly('#00f', '553,87 557,91 563,93 563,87') +
    poly('#ff0', '519,143 526,148 519,148'),
  bar: { x: 566, stops: [19, 60, 100, 139, 179, 217], text: ['1.00', '0.83', '0.65', '0.48', '0.30', '0.13'], head: 'E0' }
});

/* contour outlines are digitised at three units per pixel */
draw('c2', {
  x: 38, y: 57, w: 303, h: 35, unit: 14.25, over: 3,
  fill: '<g transform="translate(-9 -34) scale(.33333)"><rect x="142" y="274" width="911" height="105" fill="#00f"/>' +
    poly('#0ff', '178,274 162,298 180,308 222,318 233,338 210,350 186,358 204,379 1003,379 1018,362 980,348 935,330 945,316 980,297 970,282 966,274') +
    poly('#0f0', '238,274 228,284 215,296 265,312 290,324 320,330 332,345 320,360 400,363 436,372 560,369 880,372 925,358 870,345 862,320 900,308 932,295 905,282 900,274') +
    poly('#ff0', '275,297 330,288 400,282 498,281 506,286 520,281 820,281 845,290 868,296 830,308 800,320 790,340 770,352 740,355 555,355 480,352 430,342 390,324 340,310 290,303') +
    poly('#f00', '385,298 450,291 490,291 498,296 528,291 742,291 780,297 750,308 690,332 645,341 510,341 470,332 440,318 410,306') + '</g>',
  bar: { x: 345, stops: [19, 43, 65, 88, 110, 132], text: ['1.20', '0.97', '0.75', '0.53', '0.30', '0.08'], head: 'E3' }
});

draw('c4', {
  x: 38, y: 100, w: 303, h: 35, unit: 14.25, over: 3,
  fill: '<g transform="translate(-9 -3) scale(.33333)"><rect x="142" y="310" width="911" height="105" fill="#f00"/>' +
    poly('#ff0', '175,310 248,310 235,320 190,320') +
    poly('#ff0', '145,350 160,340 188,340 198,358 212,374 205,382 188,368 178,386 150,390 143,378') +
    poly('#0f0', '150,370 160,348 178,350 180,366 168,376 152,378') +
    poly('#ff0', '272,310 272,330 290,342 330,346 350,362 348,376 330,383 270,384 230,396 175,398 152,415 430,415 450,398 475,373 540,376 600,390 640,385 700,382 740,356 790,347 870,346 890,334 960,322 975,310') +
    poly('#0f0', '300,310 298,334 345,352 372,366 390,376 400,398 432,398 442,376 470,360 520,360 560,368 610,378 640,372 690,368 730,350 770,340 850,338 900,322 920,318 938,310') +
    poly('#0ff', '480,310 480,326 510,334 560,334 590,348 590,356 640,358 660,348 715,342 740,326 800,320 850,318 870,310') +
    poly('#0f0', '572,322 600,326 606,338 590,346 556,340') +
    poly('#00f', '500,310 514,310 508,315') +
    poly('#0f0', '158,415 180,403 240,402 290,394 298,415') +
    poly('#0ff', '230,407 256,404 258,412 234,414') +
    poly('#f00', '355,407 375,409 370,415 350,415') +
    poly('#0f0', '300,404 335,402 330,410 300,412') +
    poly('#ff0', '1004,352 1014,338 1030,342 1040,324 1053,318 1053,395 1030,390 1024,372 1008,366') +
    poly('#0f0', '1014,346 1028,350 1040,338 1053,340 1053,390 1036,390 1026,374 1012,362') +
    poly('#0ff', '1032,362 1050,360 1048,388 1036,382') +
    poly('#00f', '1040,370 1050,370 1046,384 1040,380') +
    poly('#ff0', '942,415 944,396 968,388 990,398 1042,402 1046,415') +
    poly('#0f0', '952,412 974,404 1030,409 1034,415 954,415') +
    poly('#ff0', '848,388 864,398 850,404') +
    poly('#ff0', '874,412 892,402 908,412') + '</g>',
  bar: { x: 345, stops: [19, 60, 100, 139, 179, 217], text: ['6.00', '5.30', '4.60', '3.90', '3.20', '2.51'], head: 'E3' }
});
```
